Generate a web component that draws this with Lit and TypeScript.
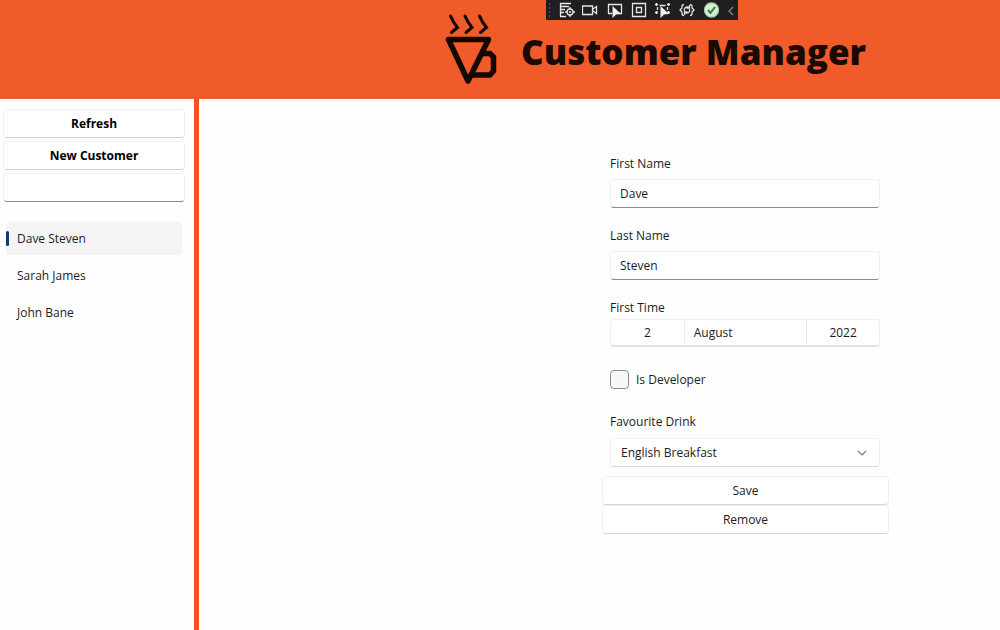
import { LitElement, html, css } from "lit";
import { customElement, state } from "lit/decorators.js";

interface Customer {
  first: string;
  last: string;
}

@customElement("debug-toolbar")
class DebugToolbar extends LitElement {
  static styles = css`
    :host {
      display: flex;
      align-items: center;
      gap: 6px;
      height: 20px;
      padding: 0 3px 0 2px;
      background: #1f1f21;
      box-sizing: border-box;
    }
    .grip {
      width: 4px;
      height: 16px;
      background-image: radial-gradient(#55555a 1px, transparent 1px);
      background-size: 3px 4px;
    }
    button {
      display: block;
      padding: 0;
      border: 0;
      background: none;
      width: 18px;
      height: 18px;
    }
    .collapse {
      width: 8px;
      margin-left: 1px;
    }
    svg {
      display: block;
      width: 100%;
      height: 100%;
      fill: none;
      stroke: #e6e6e6;
      stroke-width: 1.3;
    }
    .solid {
      fill: #f2f2f2;
      stroke: none;
    }
    .dim {
      stroke: #8a8a8a;
    }
    .ok {
      fill: #d9ecd6;
      stroke: #a8d3a4;
    }
    .tick {
      stroke: #2f7d36;
      stroke-width: 2;
    }
  `;

  render() {
    return html`
      <span class="grip"></span>
      <button aria-label="Live visual tree">
        <svg viewBox="0 0 18 18">
          <path d="M2 2.5h11M3 5.5h8M3 8.5h4M3 11.5h3M2 15.5h6M2.5 2v13" />
          <circle cx="12" cy="11" r="3" />
          <circle class="solid" cx="12" cy="11" r="1" />
          <path d="M12 6v2M12 14v2M7 11h2M15 11h2" />
        </svg>
      </button>
      <button aria-label="Camera">
        <svg viewBox="0 0 18 18">
          <path d="M.5 5h10v8.500H.5zM11 8l3.500-2.500v7L11 10" />
        </svg>
      </button>
      <button aria-label="Select element">
        <svg viewBox="0 0 18 18">
          <path d="M6 12.500H2.500V3.500h13V12.500H13" />
          <path class="solid" d="M6.500 5v12l3.500-3.500 5-.5z" />
        </svg>
      </button>
      <button aria-label="Display layout adorners">
        <svg viewBox="0 0 18 18">
          <path d="M2.500 2.500h13v13h-13zM6.500 6.500h5v5h-5z" />
        </svg>
      </button>
      <button aria-label="Track focused element">
        <svg viewBox="0 0 18 18">
          <path d="M1 3.500h3M2.500 2v3M13 3.500h3M14.500 2v3M1 11.500h3M2.500 10v3M13 11.500h3M14.500 10v3M5.500 4.500h6M3.500 6v3M13.500 6v3" />
          <path class="solid" d="M6.500 5v12l3.500-3.500 5-.5z" />
        </svg>
      </button>
      <button aria-label="Binding failures">
        <svg viewBox="0 0 18 18">
          <path d="M6 3.500C3.500 3.500 4 6 4 7L2 9l2 2c0 1-.5 3.500 2 3.500M12 3.500c2.500 0 2 2.500 2 3.500l2 2-2 2c0 1 .5 3.500-2 3.500" />
          <path d="M6.500 10c-1-3 2-5 4.500-3.500M11.500 8c1 3-2 5-4.500 3.500M11.500 4v3H8.500M6.500 14v-3h3" />
        </svg>
      </button>
      <button aria-label="Hot reload available">
        <svg viewBox="0 0 18 18">
          <circle class="ok" cx="9.500" cy="9" r="7" />
          <path class="tick" d="M6 9l2.500 3 4.500-6" />
        </svg>
      </button>
      <button class="collapse" aria-label="Collapse">
        <svg viewBox="0 0 8 18"><path class="dim" d="M6 6L2 10l4 4" /></svg>
      </button>
    `;
  }
}

@customElement("app-root")
class AppRoot extends LitElement {
  @state() private customers: Customer[] = [
    { first: "Dave", last: "Steven" },
    { first: "Sarah", last: "James" },
    { first: "John", last: "Bane" },
  ];
  @state() private selected = 0;

  static styles = css`
    :host {
      display: flex;
      flex-direction: column;
      min-height: 100vh;
      position: relative;
      background: #fefefe;
      color: #1c1c1c;
      font-family: "Open Sans", "Noto Sans", sans-serif;
      font-size: 12px;
      line-height: 18px;
    }
    * {
      box-sizing: border-box;
    }
    debug-toolbar {
      position: absolute;
      top: 0;
      right: 262px;
    }
    header {
      display: grid;
      grid-template-columns: 440fr 60px 21px 479fr;
      align-items: center;
      height: 99px;
      background: #f15a29;
    }
    .logo {
      grid-column: 2;
      width: 60px;
      height: 80px;
      fill: none;
      stroke: #120800;
      stroke-width: 5.5;
      stroke-linejoin: round;
      stroke-linecap: round;
    }
    .steam {
      stroke-width: 3;
      stroke-linejoin: miter;
    }
    h1 {
      grid-column: 4;
      margin: 0;
      padding-top: 5px;
      color: #1a0a02;
      font-size: 35px;
      line-height: 48px;
      font-weight: 800;
      white-space: nowrap;
    }
    .body {
      display: flex;
      flex: 1;
    }
    aside {
      width: 199px;
      border-right: 5px solid #f6501e;
      padding: 10px 9px 0 3px;
      display: flex;
      flex-direction: column;
      gap: 3px;
    }
    button,
    input,
    select {
      font: inherit;
      color: inherit;
    }
    .btn,
    .field {
      display: block;
      width: 100%;
      height: 29px;
      padding: 0 9px;
      background: #fff;
      border: 1px solid #f0f0f0;
      border-bottom-color: #d6d6d6;
      border-radius: 4px;
    }
    input.field {
      padding-bottom: 1px;
      border-bottom-color: #8a8a8a;
    }
    .strong {
      font-weight: 700;
      color: #000;
    }
    ul {
      list-style: none;
      margin: 17px 0 0;
      padding: 0 3px;
      display: flex;
      flex-direction: column;
      gap: 4px;
    }
    .item {
      display: flex;
      align-items: center;
      width: 100%;
      height: 33px;
      padding: 0;
      gap: 8px;
      border: 0;
      border-radius: 3px;
      background: none;
      text-align: left;
    }
    .item::before {
      content: "";
      width: 3px;
      height: 15px;
      border-radius: 2px;
    }
    .item.active {
      background: #f4f4f4;
    }
    .item.active::before {
      background: #0f3a6b;
    }
    main {
      flex: 1;
      display: grid;
      grid-template-columns: 403fr 287px 111fr;
      align-content: start;
      padding-top: 56px;
    }
    form {
      grid-column: 2;
    }
    .fields {
      padding: 0 9px 0 8px;
      display: flex;
      flex-direction: column;
      gap: 19px;
      margin-bottom: 9px;
    }
    .group {
      display: flex;
      flex-direction: column;
      gap: 6px;
    }
    .tight {
      gap: 2px;
    }
    .roomy {
      gap: 7px;
    }
    .date {
      display: grid;
      grid-template-columns: 73fr 123fr 73fr;
      height: 28px;
      border: 1px solid #f0f0f0;
      border-bottom: 2px solid #e2e2e2;
      border-radius: 4px;
      background: #fff;
    }
    .date button {
      border: 0;
      background: none;
      padding: 0 9px;
    }
    .date button + button {
      border-left: 1px solid #ececec;
    }
    .date .month {
      text-align: left;
    }
    .check {
      display: flex;
      align-items: center;
      gap: 7px;
      padding: 4px 0 5px;
    }
    .check input {
      appearance: none;
      width: 19px;
      height: 19px;
      margin: 0;
      border: 1px solid #8c8c8c;
      border-radius: 4px;
      background: #f8f8f8;
    }
    .select {
      display: grid;
      align-items: center;
    }
    .select > * {
      grid-area: 1 / 1;
    }
    .select select {
      appearance: none;
      padding-left: 10px;
    }
    .chevron {
      justify-self: end;
      width: 10px;
      height: 10px;
      margin-right: 13px;
      fill: none;
      stroke: #777;
      stroke-width: 1.2;
      pointer-events: none;
    }
    .actions {
      display: flex;
      flex-direction: column;
    }
  `;

  render() {
    const current = this.customers[this.selected];
    return html`
      <header>
        <svg class="logo" viewBox="440 10 60 80" aria-hidden="true">
          <g class="steam">
            <path d="M450.500 16l3 6 4 5.500-6 5" />
            <path d="M465 16l3 6 4 5.500-6 5" />
            <path d="M479.500 16l3 6 4 5.500-6 5" />
          </g>
          <path d="M448.500 39.500H488.500L468 81z" />
          <path d="M483 53.500h7l3.500 3.500v14l-3.500 4H472" />
        </svg>
        <h1>Customer Manager</h1>
      </header>
      <debug-toolbar></debug-toolbar>
      <div class="body">
        <aside>
          <button class="btn strong">Refresh</button>
          <button class="btn strong">New Customer</button>
          <input class="field" type="text" aria-label="Search" />
          <ul>
            ${this.customers.map(
              (c, i) => html`<li>
                <button
                  class="item ${i === this.selected ? "active" : ""}"
                  @click=${() => (this.selected = i)}
                >
                  ${c.first} ${c.last}
                </button>
              </li>`
            )}
          </ul>
        </aside>
        <main>
          <form @submit=${(e: Event) => e.preventDefault()}>
            <div class="fields">
              <div class="group">
                <label for="first">First Name</label>
                <input class="field" id="first" type="text" .value=${current.first} />
              </div>
              <div class="group">
                <label for="last">Last Name</label>
                <input class="field" id="last" type="text" .value=${current.last} />
              </div>
              <div class="group tight" role="group" aria-labelledby="time">
                <span id="time">First Time</span>
                <div class="date">
                  <button type="button">2</button>
                  <button type="button" class="month">August</button>
                  <button type="button">2022</button>
                </div>
              </div>
              <label class="check"><input type="checkbox" />Is Developer</label>
              <div class="group roomy">
                <label for="drink">Favourite Drink</label>
                <div class="select">
                  <select class="field" id="drink">
                    <option>English Breakfast</option>
                  </select>
                  <svg class="chevron" viewBox="0 0 10 10"><path d="M1 3l4 4 4-4" /></svg>
                </div>
              </div>
            </div>
            <div class="actions">
              <button class="btn" type="submit">Save</button>
              <button class="btn" type="button">Remove</button>
            </div>
          </form>
        </main>
      </div>
    `;
  }
}
